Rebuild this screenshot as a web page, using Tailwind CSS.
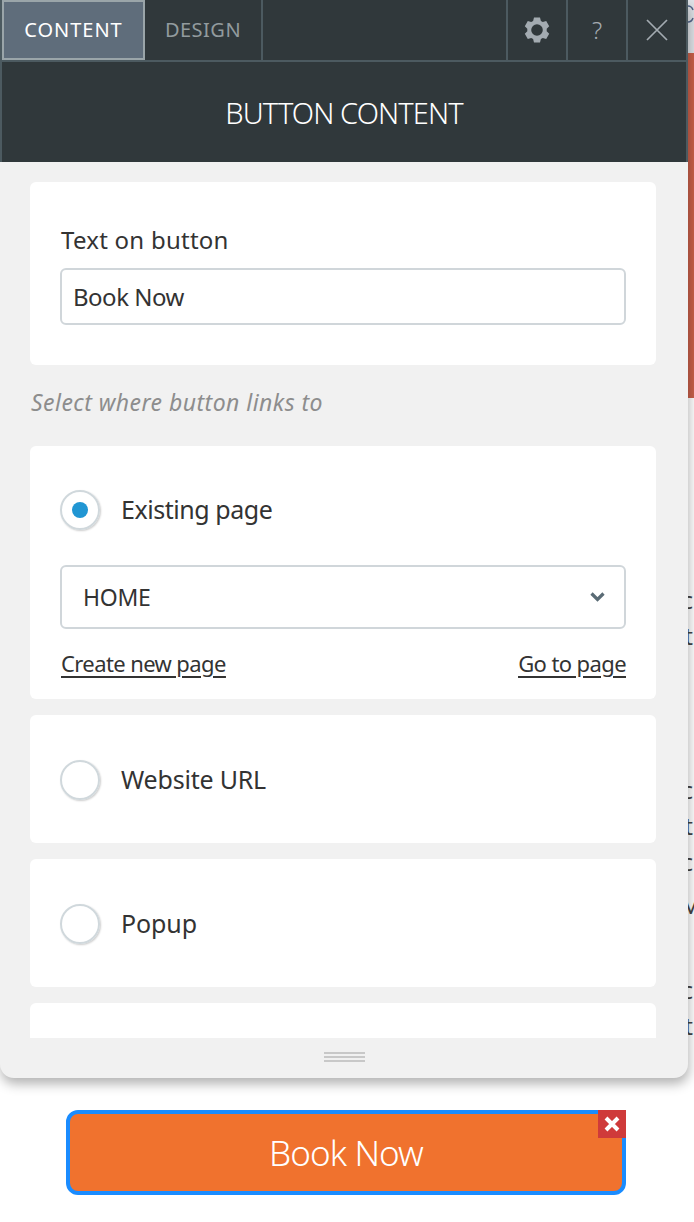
<!DOCTYPE html>
<html lang="en">

<head>
  <meta charset="UTF-8" />
  <title>Button content</title>
  <script src="https://cdn.jsdelivr.net/npm/@tailwindcss/browser@4"></script>
</head>

<body class="bg-white font-['Noto_Sans',sans-serif] text-[#333]">
  <div class="relative w-[694px] h-[1222px] overflow-hidden">

    <!-- page behind the panel -->
    <div class="absolute top-0 right-0 w-[6px] h-[53px] bg-[#dfe3e8]">
      <svg class="w-[6px] h-[30px]" viewBox="0 0 6 30" fill="none" stroke="#55688c" stroke-width="1.5">
        <path d="M0 6c2 0 4 1 5 4M0 22c2 0 4-1 5-4" />
      </svg>
    </div>
    <div class="absolute top-[53px] right-0 w-[6px] h-[345px] bg-[#c9604a]"></div>
    <div class="absolute top-[582px] left-[660px] w-[33px] text-right text-[24px] leading-[36px] text-[#444] whitespace-pre">c
st</div>
    <div class="absolute top-[772px] left-[660px] w-[33px] text-right text-[24px] leading-[36px] text-[#444] whitespace-pre">c
st
c</div>
    <div class="absolute top-[887px] left-[680px] text-[24px] leading-[36px] text-[#444] whitespace-pre">M</div>
    <div class="absolute top-[972px] left-[660px] w-[33px] text-right text-[24px] leading-[36px] text-[#444] whitespace-pre">c
st</div>

    <!-- panel -->
    <div class="relative w-[688px] h-[1078px] bg-[#f1f1f1] rounded-b-[14px] shadow-[1px_6px_12px_rgba(0,0,0,0.3)] flex flex-col overflow-hidden">
      <!-- tabs -->
      <div class="h-[62px] shrink-0 bg-[#30383b] border-l-2 border-r-2 border-b-2 border-[#4c5a60] flex items-stretch text-[20px] leading-none">
        <div class="w-[143px] bg-[#5f6d7b] border-2 border-[#9aa5a9] text-white flex items-center justify-center tracking-[0.95px]">CONTENT</div>
        <div class="w-[118px] border-r-2 border-[#4c5a60] text-[#929b9e] flex items-center justify-center tracking-[0.5px]">DESIGN</div>
        <div class="flex-1"></div>
        <div class="w-[60px] border-l-2 border-[#4c5a60] flex items-center justify-center">
          <svg class="w-[28px] h-[28px]" viewBox="0 0 28 28" fill="#a3abb1">
            <path fill-rule="evenodd" d="M11 1.5h6l.9 3.4 1.9 1.1 3.4-.9 3 5.2-2.5 2.5v2.4l2.5 2.5-3 5.2-3.4-.9-1.9 1.1-.9 3.4h-6l-.9-3.4-1.9-1.1-3.4.9-3-5.2 2.5-2.5v-2.4L1.8 10.3l3-5.2 3.4.9 1.9-1.1zM14 8.2a5.8 5.8 0 1 0 0 11.6 5.8 5.8 0 0 0 0-11.6z" />
          </svg>
        </div>
        <div class="w-[60px] border-l-2 border-[#4c5a60] flex items-center justify-center text-[#a3abb1] text-[24px] font-light">?</div>
        <div class="w-[60px] border-l-2 border-[#4c5a60] flex items-center justify-center">
          <svg class="w-[22px] h-[22px]" viewBox="0 0 22 22" fill="none" stroke="#a3abb1" stroke-width="1.7">
            <path d="M1 1l20 20M21 1L1 21" />
          </svg>
        </div>
      </div>

      <!-- heading -->
      <div class="h-[100px] shrink-0 bg-[#30383b] border-l-2 border-r-2 border-[#4c5a60] flex items-center justify-center text-white text-[29px] font-light tracking-[-0.9px] leading-none">BUTTON CONTENT</div>

      <!-- scrolling form -->
      <div class="h-[876px] shrink-0 overflow-hidden pl-[30px] pr-[32px] pt-[20px]">
        <div class="h-[183px] bg-white rounded-md px-[30px] pt-[41px]">
          <div class="text-[24px] leading-[36px] -mt-[1px] pl-[1px] tracking-[0.25px]">Text on button</div>
          <div class="h-[57px] mt-[10px] border-2 border-[#d0d6da] rounded-md px-[11px] flex items-center text-[24px] tracking-[-0.5px]">Book Now</div>
        </div>

        <div class="h-[81px] pt-[21px] pl-[1px] italic text-[#8d8d8d] text-[23px] leading-[32px] tracking-[0.45px]">Select where button links to</div>

        <div class="h-[253px] bg-white rounded-md px-[30px] pt-[44px]">
          <div class="flex items-center gap-[21px] h-[40px]">
            <div class="w-[40px] h-[40px] rounded-full border-2 border-[#d0d8dc] shadow-[1px_1px_2px_rgba(0,0,0,0.2)] flex items-center justify-center">
              <div class="w-[16px] h-[16px] rounded-full bg-[#2196d3]"></div>
            </div>
            <span class="text-[25px] tracking-[-0.45px]">Existing page</span>
          </div>
          <div class="h-[64px] mt-[35px] border-2 border-[#d0d6da] rounded-md pl-[21px] pr-[19px] flex items-center justify-between text-[23px] tracking-[-0.3px]">
            <span>HOME</span>
            <svg class="w-[15px] h-[10px]" viewBox="0 0 15 10" fill="none" stroke="#5a6b75" stroke-width="3.2">
              <path d="M1.5 1.5l6 6 6-6" />
            </svg>
          </div>
          <div class="flex justify-between mt-[18px] pl-[1px] text-[22px] leading-[32px] tracking-[-0.6px] underline underline-offset-[4px]">
            <a>Create new page</a>
            <a>Go to page</a>
          </div>
        </div>

        <div class="h-[128px] mt-[16px] bg-white rounded-md px-[30px] pt-[45px]">
          <div class="flex items-center gap-[21px] h-[40px]">
            <div class="w-[40px] h-[40px] rounded-full border-2 border-[#d0d8dc] shadow-[1px_1px_2px_rgba(0,0,0,0.2)]"></div>
            <span class="text-[25px] tracking-[-0.2px]">Website URL</span>
          </div>
        </div>

        <div class="h-[128px] mt-[16px] bg-white rounded-md px-[30px] pt-[45px]">
          <div class="flex items-center gap-[21px] h-[40px]">
            <div class="w-[40px] h-[40px] rounded-full border-2 border-[#d0d8dc] shadow-[1px_1px_2px_rgba(0,0,0,0.2)]"></div>
            <span class="text-[25px] tracking-[-0.1px]">Popup</span>
          </div>
        </div>

        <div class="h-[128px] mt-[16px] bg-white rounded-t-md"></div>
      </div>

      <!-- drag handle -->
      <div class="flex-1 flex flex-col items-center justify-center gap-[2px] pb-[2px]">
        <div class="w-[41px] h-[2px] bg-[#c8c8c8]"></div>
        <div class="w-[41px] h-[2px] bg-[#c8c8c8]"></div>
        <div class="w-[41px] h-[2px] bg-[#c8c8c8]"></div>
      </div>
    </div>

    <!-- selected button -->
    <div class="relative ml-[66px] mt-[32px] w-[560px] h-[85px] bg-[#f0722e] border-[4px] border-[#1a8cff] rounded-[12px] flex items-center justify-center text-white text-[35px] font-light tracking-[-0.9px] leading-none">
      Book Now
      <div class="absolute -top-[4px] -right-[4px] w-[28px] h-[28px] bg-[#cf3a3a] flex items-center justify-center">
        <svg class="w-[16px] h-[16px]" viewBox="0 0 16 16" fill="none" stroke="#fff" stroke-width="4">
          <path d="M2 2l12 12M14 2L2 14" />
        </svg>
      </div>
    </div>
  </div>
</body>

</html>
